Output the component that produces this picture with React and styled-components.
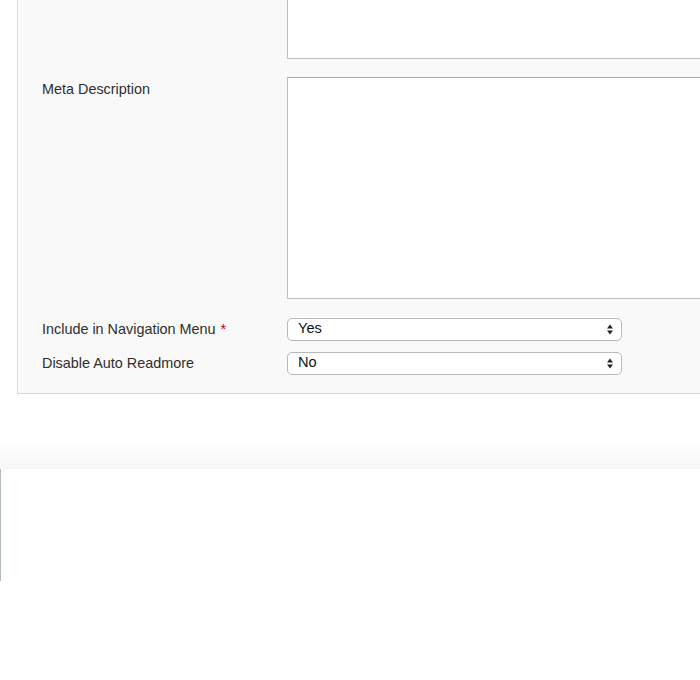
import React from "react";
import styled, { createGlobalStyle } from "styled-components";

const GlobalStyle = createGlobalStyle`
  html, body {
    margin: 0;
    padding: 0;
    background: #ffffff;
    overflow: hidden;
    font-family: "Liberation Sans", Arial, Helvetica, sans-serif;
  }
`;

const Page = styled.div`
  width: 700px;
  height: 680px;
  overflow: hidden;
  background: #ffffff;
`;

const Panel = styled.div`
  margin: -12px 0 0 17px;
  width: 760px;
  background: #f9f9f9;
  border-left: 1px solid #dadada;
  border-bottom: 1px solid #d6d6d6;
  padding: 0 0 18px 24px;
  box-sizing: border-box;
  display: flex;
  flex-direction: column;
`;

const Row = styled.div`
  display: grid;
  grid-template-columns: 245px 1fr;
  align-items: ${(p) => (p.$top ? "start" : "center")};
  margin-top: ${(p) => p.$gap || 0}px;
`;

const Label = styled.div`
  font-size: 14.4px;
  color: #2e2e2e;
  line-height: 17px;
  padding-top: ${(p) => p.$pad || 0}px;
  white-space: nowrap;
`;

const Star = styled.span`
  color: #c00000;
  margin-left: 5px;
`;

const TextArea = styled.div`
  height: ${(p) => p.$h}px;
  background: #ffffff;
  border: 1px solid #bdbdbd;
  border-top-color: #a9a9a9;
  box-sizing: border-box;
`;

const SelectBox = styled.div`
  width: 335px;
  height: 23px;
  box-sizing: border-box;
  background: #ffffff;
  border: 1px solid #b9b9b9;
  border-radius: 5px;
  display: flex;
  align-items: center;
  justify-content: space-between;
  padding: 0 8px 0 10px;
  font-size: 14.6px;
  color: #111111;
`;

const SelectText = styled.span`
  position: relative;
  top: -2px;
`;

const Arrows = () => (
  <svg width="6" height="11" viewBox="0 0 6 11">
    <path d="M0 4.5 L3 0.5 L6 4.5 Z" fill="#222" />
    <path d="M0 6.5 L3 10.5 L6 6.5 Z" fill="#222" />
  </svg>
);

const Spacer = styled.div`
  height: 47px;
`;

const Shade = styled.div`
  height: 28px;
  background: linear-gradient(to bottom, #ffffff, #f6f6f6);
`;

const Lower = styled.div`
  height: 112px;
  width: 700px;
  background: #fefefe;
  border-left: 1px solid #b3bcbc;
  box-sizing: border-box;
`;

export default function App() {
  return (
    <Page>
      <GlobalStyle />
      <Panel>
        <Row $top>
          <div />
          <TextArea $h={71} />
        </Row>
        <Row $top $gap={18}>
          <Label $pad={4}>Meta Description</Label>
          <TextArea $h={222} />
        </Row>
        <Row $gap={19}>
          <Label>
            Include in Navigation Menu<Star>*</Star>
          </Label>
          <SelectBox>
            <SelectText>Yes</SelectText>
            <Arrows />
          </SelectBox>
        </Row>
        <Row $gap={11}>
          <Label>Disable Auto Readmore</Label>
          <SelectBox>
            <SelectText>No</SelectText>
            <Arrows />
          </SelectBox>
        </Row>
      </Panel>
      <Spacer />
      <Shade />
      <Lower />
    </Page>
  );
}
